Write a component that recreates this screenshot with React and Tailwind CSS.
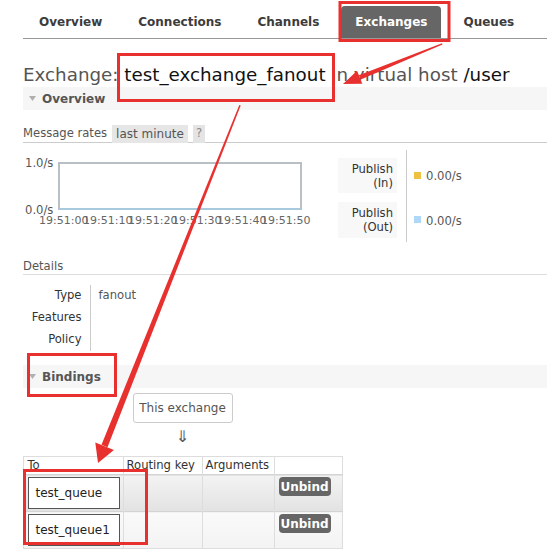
import React from 'react';

const tabs = ['Overview', 'Connections', 'Channels', 'Exchanges', 'Queues'];

const Triangle = () => (
  <svg width="7" height="5" viewBox="0 0 7 5" className="mr-[6px]">
    <polygon points="0,0 7,0 3.5,5" fill="#b0b0b0" />
  </svg>
);

const SectionBar = ({ title }) => (
  <div className="flex items-center h-[23px] bg-[#f6f6f6] pl-[6px] text-[12px] font-bold text-[#555]">
    <Triangle />
    {title}
  </div>
);

// rote Markierungen und Pfeile aus dem Screenshot
const Annotations = () => (
  <svg className="absolute left-0 top-0 pointer-events-none" width="547" height="555" viewBox="0 0 547 555">
    <g fill="none" stroke="#e8312f" strokeWidth="3">
      <rect x="340" y="2.5" width="109" height="38" />
      <rect x="118.5" y="54.5" width="215" height="46" />
      <rect x="28.5" y="354.5" width="87" height="41" />
      <rect x="24.5" y="470.5" width="122" height="73" />
    </g>
    <g fill="#e8312f">
      <polygon points="442,43.3 442.5,44.6 360.8,79.6 358.8,75.2" />
      <polygon points="343,84 357.1,70.8 362.3,83.8" />
      <polygon points="239.3,105 240.7,105.5 107.5,447.2 101.5,444.8" />
      <polygon points="98,463 95.3,442.6 113.9,450" />
    </g>
  </svg>
);

const xLabels = [
  ['19:51:00', 'left-[16px]'],
  ['19:51:10', 'left-[60px]'],
  ['19:51:20', 'left-[105px]'],
  ['19:51:30', 'left-[149px]'],
  ['19:51:40', 'left-[194px]'],
  ['19:51:50', 'left-[238px]'],
];

const bindings = ['test_queue', 'test_queue1'];

export default function App() {
  return (
    <div className="relative w-[547px] h-[555px] overflow-hidden bg-white pl-[23px] font-['DejaVu_Sans',Verdana,sans-serif] text-[11.6px] text-[#484848]">
      {/* Navigation */}
      <div className="flex items-end gap-[8px] pl-[2px] pt-[6px] border-b border-[#999]">
        {tabs.map((t) => (
          <div
            key={t}
            className={`h-[32px] px-[14px] flex items-center text-[12px] font-bold rounded-t-[4px] ${
              t === 'Exchanges' ? 'bg-[#666] text-white' : 'text-[#3c3c3c]'
            }`}
          >
            {t}
          </div>
        ))}
      </div>

      {/* Titel */}
      <h1 className="mt-[24px] text-[18.3px] leading-[24px] font-normal text-[#555] whitespace-nowrap">
        Exchange: <span className="text-[#111]">test_exchange_fanout</span> in virtual host{' '}
        <span className="text-[#111]">/user</span>
      </h1>

      <SectionBar title="Overview" />

      {/* Message rates */}
      <div className="mt-[15px] flex items-center h-[18px] border-b border-[#ccc] text-[#555]">
        <span className="mr-[5px]">Message rates</span>
        <span className="bg-[#e6e6e6] h-[18px] px-[4px] flex items-center text-[12px]">last minute</span>
        <span className="ml-[5px] bg-[#e4e4e4] h-[18px] px-[3px] flex items-center text-[#888]">?</span>
      </div>

      <div className="flex mt-[7px]">
        {/* Chart */}
        <div className="relative w-[315px] h-[92px] text-[#555]">
          <span className="absolute left-[2px] top-[6px] leading-[14px]">1.0/s</span>
          <span className="absolute left-[2px] top-[53px] leading-[14px]">0.0/s</span>
          <div className="absolute left-[35px] top-[12px] w-[244px] h-[48px] border-2 border-[#b8c0c6] border-b-[#a9c9df]" />
          {xLabels.map(([l, pos]) => (
            <span key={l} className={`absolute top-[64px] leading-[14px] text-[11px] text-[#666] ${pos}`}>
              {l}
            </span>
          ))}
        </div>

        {/* Legende */}
        <div className="flex">
          <div className="flex flex-col gap-[9px] pt-[8px] pb-[4px]">
            <div className="w-[59px] h-[35px] bg-[#f8f8f8] text-right pr-[4px] leading-[14px] pt-[4px] text-[#333]">
              Publish
              <br />
              (In)
            </div>
            <div className="w-[59px] h-[36px] bg-[#f8f8f8] text-right pr-[4px] leading-[14px] pt-[4px] text-[#333]">
              Publish
              <br />
              (Out)
            </div>
          </div>
          <div className="ml-[9px] border-l border-[#ccc] flex flex-col gap-[9px] pt-[8px] pb-[4px] pl-[7px] text-[#555]">
            <div className="h-[35px] flex items-center pt-[3px]">
              <span className="w-[7px] h-[7px] bg-[#edc240] mr-[5px] -mt-[4px]" />
              0.00/s
            </div>
            <div className="h-[36px] flex items-center pt-[3px]">
              <span className="w-[7px] h-[7px] bg-[#afd8f8] mr-[5px] -mt-[4px]" />
              0.00/s
            </div>
          </div>
        </div>
      </div>

      {/* Details */}
      <div className="mt-[17px] leading-[15px] border-b border-[#ddd] text-[#555]">Details</div>
      <table className="mt-[10px] border-collapse">
        <tbody>
          {[
            ['Type', 'fanout'],
            ['Features', ''],
            ['Policy', ''],
          ].map(([k, v]) => (
            <tr key={k} className="h-[22px]">
              <td className="w-[67px] text-right pr-[8px] border-r border-[#ccc] text-[#333]">{k}</td>
              <td className="pl-[8px] text-[#555]">{v}</td>
            </tr>
          ))}
        </tbody>
      </table>

      <div className="mt-[14px]">
        <SectionBar title="Bindings" />
      </div>

      {/* Bindings */}
      <div className="w-[319px] flex flex-col items-center mt-[5px]">
        <div className="h-[30px] w-[100px] border border-[#ccc] rounded-[3px] flex items-center justify-center text-[12px] text-[#555]">
          This exchange
        </div>
        <div className="mt-[4px] h-[20px] leading-[20px] text-[16px] text-[#555]">⇓</div>
        <table className="mt-[9px] w-[319px] border-collapse border border-[#ddd] table-fixed">
          <thead>
            <tr className="h-[17px] text-left">
              <th className="w-[100px] font-normal pl-[4px] border-r border-[#ddd] text-[#333]">To</th>
              <th className="w-[79px] font-normal pl-[3px] border-r border-[#ddd] text-[#333]">Routing key</th>
              <th className="w-[72px] font-normal pl-[3px] border-r border-[#ddd] text-[#333]">Arguments</th>
              <th className="w-[68px]" />
            </tr>
          </thead>
          <tbody>
            {bindings.map((q, i) => (
              <tr
                key={q}
                className={`h-[37px] border-t border-[#d4d4d4] bg-gradient-to-b ${
                  i === 0 ? 'from-[#f3f3f3] to-[#e2e2e2]' : 'from-[#fafafa] to-[#f3f3f3]'
                }`}
              >
                <td className="align-top pt-[2px] pl-[4px] border-r border-[#ddd]">
                  <div className="w-[92px] h-[32px] bg-white border border-[#555] flex items-center pl-[7px] text-[12px] text-[#222]">
                    {q}
                  </div>
                </td>
                <td className="border-r border-[#ddd]" />
                <td className="border-r border-[#ddd]" />
                <td className="align-top pt-[2px] pl-[4px]">
                  <div className="w-[52px] h-[19px] bg-[#666] rounded-[4px] flex items-center justify-center text-[12px] font-bold text-white">
                    Unbind
                  </div>
                </td>
              </tr>
            ))}
          </tbody>
        </table>
      </div>

      <Annotations />
    </div>
  );
}
